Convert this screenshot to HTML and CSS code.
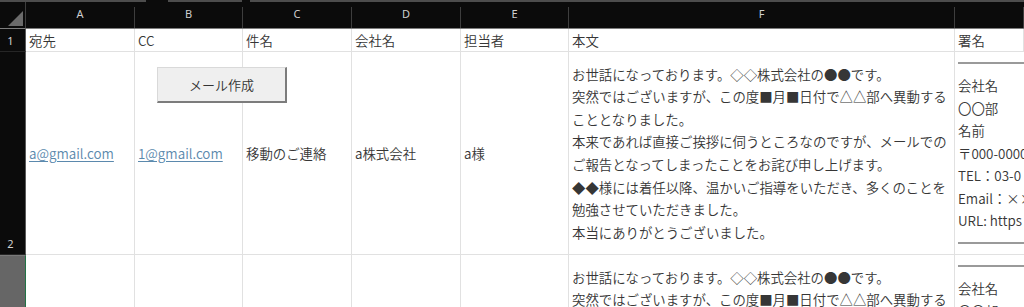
FILE: index.html
```html
<!DOCTYPE html>
<html lang="ja">
<head>
<meta charset="utf-8">
<title>メール作成シート</title>
<link rel="stylesheet" href="styles.css">
</head>
<body>
<div class="tabs">
  <span class="tab t1"></span>
  <span class="tab t2"></span>
  <span class="tab t3"></span>
</div>
<div class="sheet">
  <div class="corner">
    <svg width="25" height="26" viewBox="0 0 25 26"><polygon points="8,24 23,24 23,9" fill="#6b6b6b"/></svg>
  </div>
  <div class="colhdr"><span>A</span></div>
  <div class="colhdr"><span>B</span></div>
  <div class="colhdr"><span>C</span></div>
  <div class="colhdr"><span>D</span></div>
  <div class="colhdr"><span>E</span></div>
  <div class="colhdr"><span>F</span></div>
  <div class="colhdr"><span></span></div>

  <div class="rowhdr r1">1</div>
  <div class="cell">宛先</div>
  <div class="cell">CC</div>
  <div class="cell">件名</div>
  <div class="cell">会社名</div>
  <div class="cell">担当者</div>
  <div class="cell">本文</div>
  <div class="cell">署名</div>

  <div class="rowhdr r2">2</div>
  <div class="cell"><a class="link" href="#">a@gmail.com</a></div>
  <div class="cell"><a class="link" href="#">1@gmail.com</a></div>
  <div class="cell">移動のご連絡</div>
  <div class="cell">a株式会社</div>
  <div class="cell">a様</div>
  <div class="cell multi">
    <div class="lines">
      <div>お世話になっております。◇◇株式会社の●●です。</div>
      <div>突然ではございますが、この度■月■日付で△△部へ異動する</div>
      <div>こととなりました。</div>
      <div>本来であれば直接ご挨拶に伺うところなのですが、メールでの</div>
      <div>ご報告となってしまったことをお詫び申し上げます。</div>
      <div>◆◆様には着任以降、温かいご指導をいただき、多くのことを</div>
      <div>勉強させていただきました。</div>
      <div>本当にありがとうございました。</div>
    </div>
  </div>
  <div class="cell multi sig">
    <div class="lines">
      <div class="rule"><span></span></div>
      <div>会社名</div>
      <div>〇〇部</div>
      <div>名前</div>
      <div>〒000-0000</div>
      <div>TEL：03-0</div>
      <div>Email：××</div>
      <div>URL: https</div>
      <div class="rule"><span></span></div>
    </div>
  </div>

  <div class="rowhdr r3"></div>
  <div class="cell"></div>
  <div class="cell"></div>
  <div class="cell"></div>
  <div class="cell"></div>
  <div class="cell"></div>
  <div class="cell multi">
    <div class="lines">
      <div>お世話になっております。◇◇株式会社の●●です。</div>
      <div>突然ではございますが、この度■月■日付で△△部へ異動する</div>
      <div>こととなりました。</div>
      <div>本来であれば直接ご挨拶に伺うところなのですが、メールでの</div>
      <div>ご報告となってしまったことをお詫び申し上げます。</div>
      <div>◆◆様には着任以降、温かいご指導をいただき、多くのことを</div>
      <div>勉強させていただきました。</div>
      <div>本当にありがとうございました。</div>
    </div>
  </div>
  <div class="cell multi sig">
    <div class="lines">
      <div class="rule"><span></span></div>
      <div>会社名</div>
      <div>〇〇部</div>
      <div>名前</div>
      <div>〒000-0000</div>
      <div>TEL：03-0</div>
      <div>Email：××</div>
      <div>URL: https</div>
      <div class="rule"><span></span></div>
    </div>
  </div>

  <button class="btn" type="button">メール作成</button>
</div>
</body>
</html>
```

FILE: styles.css
```css
html, body {
  margin: 0;
  padding: 0;
}
body {
  width: 1024px;
  height: 307px;
  overflow: hidden;
  background: #ffffff;
  font-family: "Noto Sans CJK JP", "Noto Sans", sans-serif;
}
.tabs {
  display: flex;
  height: 2px;
  background: #0b0b0b;
}
.tab {
  display: block;
  height: 2px;
  background: #4d4d4d;
}
.t1 { width: 146px; margin-right: 22px; }
.t2 { width: 74px; margin-right: 8px; }
.t3 { flex: 1; }

.sheet {
  position: relative;
  display: grid;
  grid-template-columns: 26px 109px 108px 109px 109px 108px 386px 69px;
  grid-template-rows: 27px 23px 203px 203px;
  width: 1024px;
}
.corner {
  background: #0b0b0b;
  border-bottom: 1px solid #7d7d7d;
  border-right: 1px solid #3e3e3e;
  box-sizing: border-box;
}
.corner svg { display: block; }
.colhdr {
  background: #0b0b0b;
  border-bottom: 1px solid #7d7d7d;
  padding-top: 5px;
  box-sizing: border-box;
}
.colhdr span {
  display: block;
  height: 21px;
  box-sizing: border-box;
  border-right: 1px solid #3e3e3e;
  text-align: center;
  font-family: "Noto Sans", "DejaVu Sans", sans-serif;
  font-size: 11px;
  line-height: 14px;
  color: #cfcfcf;
}
.rowhdr {
  background: #0b0b0b;
  color: #d2d2d2;
  font-family: "Noto Sans", "DejaVu Sans", sans-serif;
  font-size: 11px;
  box-sizing: border-box;
  border-right: 1px solid #5a5a5a;
  border-bottom: 1px solid #262626;
  display: flex;
  justify-content: center;
  padding-right: 4px;
}
.r1 { align-items: center; }
.r2 { align-items: flex-end; padding-bottom: 3px; line-height: 14px; }
.r3 {
  background: #666666;
  border-right: 1px solid #217346;
  border-top: 1px solid #7a7a7a;
}
.cell {
  box-sizing: border-box;
  border-right: 1px solid #e1e1e1;
  border-bottom: 1px solid #e1e1e1;
  padding: 0 3px;
  display: flex;
  align-items: center;
  white-space: nowrap;
  overflow: hidden;
  font-size: 13.4px;
  font-weight: 350;
  color: #363636;
  background: #ffffff;
}
.sig {
  border-right: none;
  padding-right: 0;
}
.lines {
  line-height: 22.6px;
  width: 100%;
}
.rule {
  height: 22.6px;
  display: flex;
  align-items: center;
}
.rule span {
  display: block;
  width: 100%;
  height: 0;
  border-top: 2px solid #9a9a9a;
}
.link {
  color: #5b89ad;
  text-decoration: underline;
  text-underline-offset: 2px;
}
.btn {
  position: absolute;
  left: 157px;
  top: 65px;
  width: 130px;
  height: 36px;
  box-sizing: border-box;
  background: #efefef;
  border-style: solid;
  border-width: 1px 2px 2px 1px;
  border-color: #d9d9d9 #7c7c7c #7c7c7c #d9d9d9;
  font-family: "Noto Sans CJK JP", "Noto Sans", sans-serif;
  font-size: 13px;
  font-weight: 350;
  color: #333333;
  padding: 0;
  margin: 0;
}
```
